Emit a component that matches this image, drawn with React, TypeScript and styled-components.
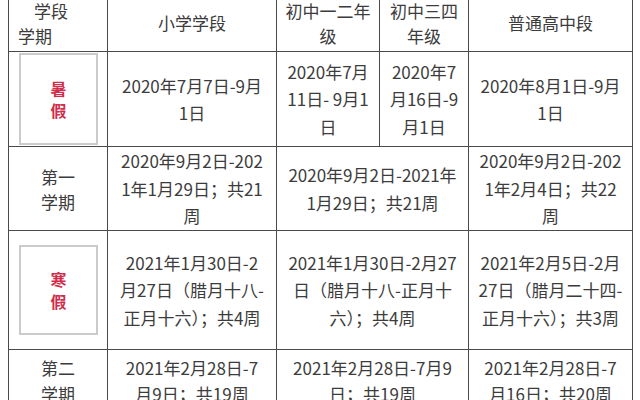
import React from "react";
import styled, { createGlobalStyle } from "styled-components";

const GlobalStyle = createGlobalStyle`
  html, body {
    margin: 0;
    background: #ffffff;
  }
  body {
    padding: 0 8px;
    font-family: "Noto Sans CJK SC", "Noto Sans", sans-serif;
    color: #3c3c3c;
    overflow: hidden;
  }
`;

const Table = styled.table`
  width: 624px;
  margin-top: -7px;
  border-collapse: collapse;
  table-layout: fixed;
  font-size: 17px;
`;

const Cell = styled.td<{ $h: number; $lh?: number }>`
  height: ${(p) => p.$h}px;
  border: 1px solid #4a4a4a;
  padding: 0;
  text-align: center;
  vertical-align: middle;
  line-height: ${(p) => p.$lh ?? 27.5}px;
  white-space: nowrap;
`;

const SplitTop = styled.div`
  text-align: left;
  padding-left: 25px;
  line-height: 25px;
`;

const SplitBottom = styled.div`
  text-align: left;
  padding-left: 9px;
  line-height: 25px;
`;

const HolidayBox = styled.div<{ $h: number }>`
  margin: 0 9px 0 10px;
  height: ${(p) => p.$h}px;
  border: 2px solid #cbcbcb;
  box-sizing: border-box;
  display: flex;
  flex-direction: column;
  align-items: center;
  justify-content: center;
  color: #cf2d4b;
  font-weight: 700;
  font-size: 16px;
  line-height: 22px;
`;

const Lines = ({ lines }: { lines: string[] }) => (
  <>
    {lines.map((l, i) => (
      <React.Fragment key={i}>
        {i > 0 && <br />}
        {l}
      </React.Fragment>
    ))}
  </>
);

export default function App() {
  return (
    <>
      <GlobalStyle />
      <Table>
        <colgroup>
          <col style={{ width: 99 }} />
          <col style={{ width: 169 }} />
          <col style={{ width: 103 }} />
          <col style={{ width: 89 }} />
          <col style={{ width: 164 }} />
        </colgroup>
        <tbody>
          <tr>
            <Cell $h={57}>
              <SplitTop>学段</SplitTop>
              <SplitBottom>学期</SplitBottom>
            </Cell>
            <Cell $h={57}>小学学段</Cell>
            <Cell $h={57} $lh={25}>
              <Lines lines={["初中一二年", "级"]} />
            </Cell>
            <Cell $h={57} $lh={25}>
              <Lines lines={["初中三四", "年级"]} />
            </Cell>
            <Cell $h={57}>普通高中段</Cell>
          </tr>
          <tr>
            <Cell $h={94}>
              <HolidayBox $h={92}>
                <span>暑</span>
                <span>假</span>
              </HolidayBox>
            </Cell>
            <Cell $h={94}>
              <Lines lines={["2020年7月7日-9月", "1日"]} />
            </Cell>
            <Cell $h={94}>
              <Lines lines={["2020年7月", "11日- 9月1", "日"]} />
            </Cell>
            <Cell $h={94}>
              <Lines lines={["2020年7", "月16日-9", "月1日"]} />
            </Cell>
            <Cell $h={94}>
              <Lines lines={["2020年8月1日-9月", "1日"]} />
            </Cell>
          </tr>
          <tr>
            <Cell $h={83} $lh={25}>
              <Lines lines={["第一", "学期"]} />
            </Cell>
            <Cell $h={83}>
              <Lines lines={["2020年9月2日-202", "1年1月29日；共21", "周"]} />
            </Cell>
            <Cell $h={83} colSpan={2}>
              <Lines lines={["2020年9月2日-2021年", "1月29日；共21周"]} />
            </Cell>
            <Cell $h={83}>
              <Lines lines={["2020年9月2日-202", "1年2月4日；共22", "周"]} />
            </Cell>
          </tr>
          <tr>
            <Cell $h={118}>
              <HolidayBox $h={90}>
                <span>寒</span>
                <span>假</span>
              </HolidayBox>
            </Cell>
            <Cell $h={118}>
              <Lines lines={["2021年1月30日-2", "月27日（腊月十八-", "正月十六）；共4周"]} />
            </Cell>
            <Cell $h={118} colSpan={2}>
              <Lines lines={["2021年1月30日-2月27", "日（腊月十八-正月十", "六）；共4周"]} />
            </Cell>
            <Cell $h={118}>
              <Lines lines={["2021年2月5日-2月", "27日（腊月二十四-", "正月十六）；共3周"]} />
            </Cell>
          </tr>
          <tr>
            <Cell $h={62} $lh={26}>
              <Lines lines={["第二", "学期"]} />
            </Cell>
            <Cell $h={62} $lh={26}>
              <Lines lines={["2021年2月28日-7", "月9日；共19周"]} />
            </Cell>
            <Cell $h={62} $lh={26} colSpan={2}>
              <Lines lines={["2021年2月28日-7月9", "日；共19周"]} />
            </Cell>
            <Cell $h={62} $lh={26}>
              <Lines lines={["2021年2月28日-7", "月16日；共20周"]} />
            </Cell>
          </tr>
        </tbody>
      </Table>
    </>
  );
}
